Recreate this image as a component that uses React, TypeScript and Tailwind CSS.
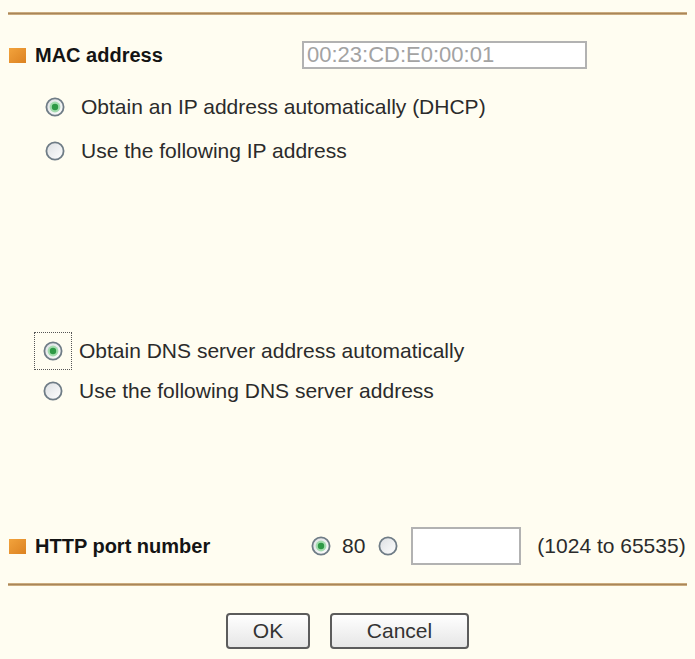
import React from 'react';

function Radio({ checked = false }: { checked?: boolean }) {
  return (
    <svg width="20" height="20" viewBox="0 0 20 20" className="shrink-0">
      <defs>
        <linearGradient id={checked ? 'rg-on' : 'rg-off'} x1="0" y1="0" x2="1" y2="1">
          <stop offset="0" stopColor="#dcdfe2" />
          <stop offset="1" stopColor="#ffffff" />
        </linearGradient>
      </defs>
      <circle cx="10" cy="10" r="8.6" fill={`url(#${checked ? 'rg-on' : 'rg-off'})`} stroke="#6f7c86" strokeWidth="1.8" />
      {checked && (
        <>
          <circle cx="10" cy="10" r="5.4" fill="#a3dcae" />
          <circle cx="10" cy="10" r="3.2" fill="#2e9a46" />
        </>
      )}
    </svg>
  );
}

function Square() {
  return <span className="ml-px h-[15px] w-[17px] shrink-0 bg-gradient-to-br from-[#f2a33c] to-[#dc8220]" />;
}

function Rule() {
  return <div className="h-[3px] w-[679px] bg-gradient-to-b from-[#dcbf92] via-[#a9865a] to-[#dcbf92]" />;
}

function Option({ checked = false, label, focused = false }: { checked?: boolean; label: string; focused?: boolean }) {
  return (
    <div className="flex h-[44px] items-center pl-[37px]">
      <span className={focused ? 'flex outline-1 outline-dotted outline-[#555] outline-offset-[8px]' : 'flex'}>
        <Radio checked={checked} />
      </span>
      <span className="ml-[16px] text-[21px] text-[#2b2b2b]">{label}</span>
    </div>
  );
}

export default function App() {
  return (
    <div
      className="flex h-[659px] w-[695px] flex-col bg-[#fffdf1] px-[8px]"
      style={{ fontFamily: '"Liberation Sans", Arial, sans-serif' }}
    >
      <div className="mt-[12px]">
        <Rule />
      </div>

      {/* MAC address */}
      <div className="mt-[26px] flex h-[28px] items-center">
        <div className="flex w-[294px] items-center">
          <Square />
          <span className="ml-[9px] text-[20px] font-bold text-[#141414]">MAC address</span>
        </div>
        <div className="flex h-[28px] w-[285px] items-center border-2 border-[#b2b2b2] bg-white pl-[3px] text-[22px] leading-none text-[#a3a3a3]">
          00:23:CD:E0:00:01
        </div>
      </div>

      <div className="mt-[16px] flex flex-col">
        <Option checked label="Obtain an IP address automatically (DHCP)" />
        <Option label="Use the following IP address" />
      </div>

      <div className="mt-[158px] flex flex-col [&>div]:h-[40px] [&>div]:pl-[35px]">
        <Option checked focused label="Obtain DNS server address automatically" />
        <Option label="Use the following DNS server address" />
      </div>

      {/* HTTP port */}
      <div className="mt-[116px] flex h-[38px] items-center whitespace-nowrap">
        <div className="flex w-[303px] items-center">
          <Square />
          <span className="ml-[9px] text-[20px] font-bold text-[#141414]">HTTP port number</span>
        </div>
        <Radio checked />
        <span className="ml-[11px] text-[21px] text-[#2b2b2b]">80</span>
        <span className="ml-[13px] flex">
          <Radio />
        </span>
        <div className="ml-[13px] h-[38px] w-[110px] shrink-0 border-2 border-[#b2b2b2] bg-white" />
        <span className="ml-[16px] text-[21px] text-[#2b2b2b]">(1024 to 65535)</span>
      </div>

      <div className="mt-[18px]">
        <Rule />
      </div>

      <div className="mt-[27px] flex justify-center gap-[20px]">
        <button className="h-[36px] w-[84px] rounded-[4px] border-2 border-[#5c5c5c] bg-gradient-to-b from-white to-[#e6e6e6] text-[21px] text-[#333]">
          OK
        </button>
        <button className="h-[36px] w-[139px] rounded-[4px] border-2 border-[#5c5c5c] bg-gradient-to-b from-white to-[#e6e6e6] text-[21px] text-[#333]">
          Cancel
        </button>
      </div>
    </div>
  );
}
